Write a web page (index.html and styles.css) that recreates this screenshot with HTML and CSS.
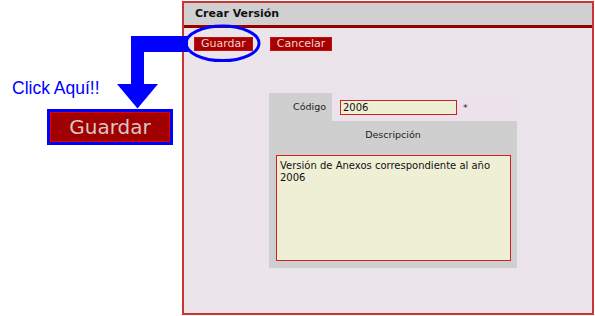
FILE: index.html
```html
<!DOCTYPE html>
<html lang="es">
<head>
    <meta charset="UTF-8">
    <meta name="viewport" content="width=device-width, initial-scale=1.0">
    <title>Crear Versión</title>
    <link rel="stylesheet" href="styles.css">
</head>
<body>

    <div class="page">
        <aside class="hint">
            <p class="hint-text">Click Aquí!!</p>
            <span class="big-button">Guardar</span>
        </aside>

        <section class="window">
            <header class="window-title">Crear Versión</header>

            <div class="toolbar">
                <button type="button" class="btn">Guardar</button>
                <button type="button" class="btn">Cancelar</button>
            </div>

            <form class="panel">
                <div class="row-code">
                    <label for="codigo" class="code-label">Código</label>
                    <div class="code-field">
                        <input type="text" id="codigo" name="codigo" value="2006">
                        <span class="required">*</span>
                    </div>
                </div>
                <div class="desc-label">Descripción</div>
                <div class="desc-field">
                    <textarea id="descripcion" name="descripcion">Versión de Anexos correspondiente al año 2006</textarea>
                </div>
            </form>
        </section>

        <!-- arrow + circle drawn over the screenshot -->
        <svg class="annotation" width="595" height="316" viewBox="0 0 595 316">
            <polygon points="131,36 188,36 188,52 144,52 144,84 158,84 137.5,108.5 117,84 131,84" fill="#0000ff"/>
            <ellipse cx="222.5" cy="43.3" rx="36.5" ry="17.3" fill="none" stroke="#0000ff" stroke-width="3"/>
        </svg>
    </div>

</body>
</html>
```

FILE: styles.css
```css
body {
    margin: 0;
    padding: 0;
    background-color: #fff;
    font-family: "DejaVu Sans", Verdana, sans-serif;
}

.page {
    position: relative;
    display: flex;
    width: 595px;
    height: 316px;
}

.hint {
    width: 182px;
    padding-top: 78px;
    box-sizing: border-box;
}

.hint-text {
    margin: 0 0 0 12px;
    font-family: "Liberation Sans", Arial, sans-serif;
    font-size: 17.5px;
    line-height: 20px;
    color: #0000ff;
}

.big-button {
    display: block;
    width: 126px;
    height: 36px;
    margin: 11px 0 0 47px;
    box-sizing: border-box;
    border: 3px solid #0000ff;
    box-shadow: inset 0 0 0 1px #e00000;
    background-color: #a00000;
    color: #d9c6c6;
    font-size: 20px;
    line-height: 30px;
    text-align: center;
}

.window {
    width: 412px;
    height: 314px;
    margin-top: 1px;
    box-sizing: border-box;
    border: 2px solid #cc3333;
    background-color: #ebe4eb;
}

.window-title {
    height: 22px;
    padding-left: 11px;
    background-color: #d0d0d0;
    border-bottom: 3px solid #990000;
    font-size: 11px;
    font-weight: bold;
    line-height: 22px;
    color: #111;
}

.toolbar {
    display: flex;
    gap: 17px;
    margin-top: 9px;
    padding-left: 10px;
}

.btn {
    height: 14px;
    padding: 0 6px;
    border: 1px solid #c01010;
    background-color: #a80000;
    color: #ecd2d2;
    font-family: "DejaVu Sans", Verdana, sans-serif;
    font-size: 11px;
    line-height: 12px;
    cursor: pointer;
}

.panel {
    width: 248px;
    margin: 42px 0 0 85px;
    background-color: #cfcfcf;
    font-size: 9.5px;
    color: #222;
}

.row-code {
    display: flex;
    height: 28px;
}

.code-label {
    width: 63px;
    padding-right: 6px;
    box-sizing: border-box;
    text-align: right;
    line-height: 28px;
}

.code-field {
    flex: 1;
    display: flex;
    align-items: center;
    padding-left: 8px;
    background-color: #ece2ec;
}

.code-field input {
    width: 117px;
    height: 15px;
    padding: 0 2px;
    box-sizing: border-box;
    border: 1px solid #cc2222;
    background-color: #efefd6;
    font-family: "DejaVu Sans", Verdana, sans-serif;
    font-size: 10px;
    color: #111;
}

.required {
    margin-left: 6px;
}

.desc-label {
    height: 27px;
    line-height: 27px;
    text-align: center;
}

.desc-field {
    padding: 7px 6px 7px 7px;
}

.desc-field textarea {
    display: block;
    width: 100%;
    height: 106px;
    padding: 4px 3px;
    box-sizing: border-box;
    border: 1px solid #cc2222;
    background-color: #efefd6;
    font-family: "DejaVu Sans", Verdana, sans-serif;
    font-size: 10px;
    line-height: 12px;
    color: #111;
    resize: none;
    overflow: hidden;
}

.annotation {
    position: absolute;
    left: 0;
    top: 0;
    pointer-events: none;
}
```
